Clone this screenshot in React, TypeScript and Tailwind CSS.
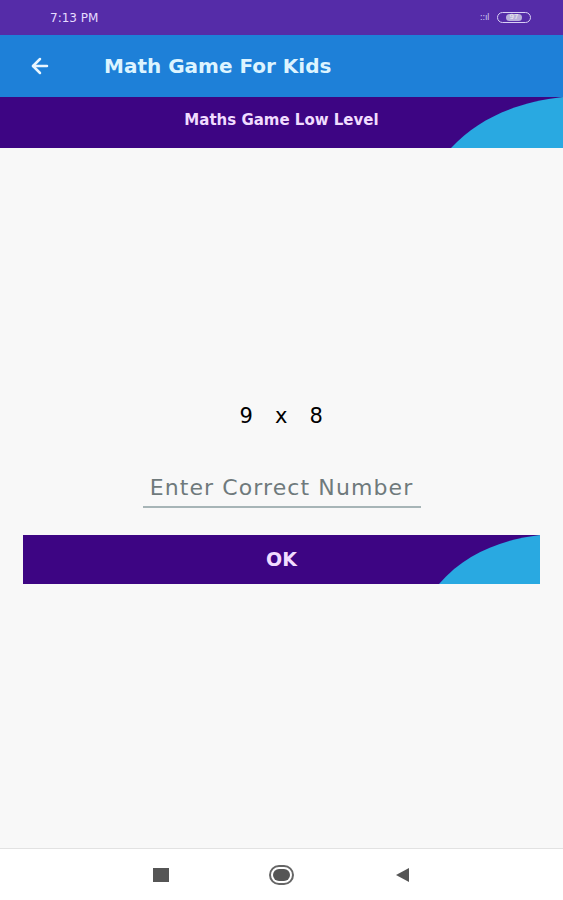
import { ArrowLeft } from "lucide-react";

const font = { fontFamily: '"DejaVu Sans", "Noto Sans", sans-serif' };

function Curve({ className }: { className: string }) {
  return (
    <svg
      className={className}
      viewBox="0 0 100 50"
      preserveAspectRatio="none"
    >
      <path d="M0 50 C 25 20, 60 5, 100 0 L100 50 Z" fill="#29a9e1" />
    </svg>
  );
}

export default function App() {
  return (
    <div className="w-[563px] h-[900px] flex flex-col bg-[#f8f8f8]" style={font}>
      {/* status bar */}
      <div className="h-[35px] bg-[#552ca8] flex items-center justify-between px-[50px] pr-[32px]">
        <span className="text-[12px] text-[#e6dcff]">7:13 PM</span>
        <div className="flex items-center gap-2">
          <span className="text-[9px] text-[#cfc4ef] tracking-tighter">::ıl</span>
          <div className="w-[34px] h-[11px] rounded-full border border-[#d8d0f5] flex items-center justify-center">
            <span className="text-[7px] leading-none text-[#eee] bg-[#b9b0da] px-1 rounded-sm">97</span>
          </div>
        </div>
      </div>

      {/* app bar */}
      <div className="h-[62px] bg-[#1e80d8] flex items-center">
        <ArrowLeft className="ml-[28px] w-[24px] h-[24px] text-[#eaf6ff]" strokeWidth={2.5} />
        <span className="ml-[52px] text-[20px] font-bold text-[#ddf4ff]">
          Math Game For Kids
        </span>
      </div>

      {/* level banner */}
      <div className="relative h-[51px] bg-[#3d0583] flex items-center justify-center overflow-hidden">
        <span className="-mt-[4px] text-[15px] font-bold text-[#f1dcff]">
          Maths Game Low Level
        </span>
        <Curve className="absolute right-0 bottom-0 w-[112px] h-[51px]" />
      </div>

      {/* content */}
      <div className="flex-1 flex flex-col items-center">
        <div className="mt-[253px] text-[21px] font-medium text-black tracking-wide">
          9&nbsp;&nbsp;&nbsp;x&nbsp;&nbsp;&nbsp;8
        </div>
        <div className="mt-[38px] w-[278px] border-b-2 border-[#a7b5b7] pb-[2px] text-center text-[22px] tracking-wider text-[#6f7a7c] whitespace-nowrap">
          Enter Correct Number
        </div>
        <button className="relative mt-[27px] w-[517px] h-[49px] bg-[#3d0583] flex items-center justify-center overflow-hidden">
          <span className="text-[19px] font-bold text-[#f1dcff]">OK</span>
          <Curve className="absolute right-0 bottom-0 w-[101px] h-[49px]" />
        </button>
      </div>

      {/* nav bar */}
      <div className="h-[52px] bg-white border-t border-[#e2e2e2] flex items-center justify-center gap-[100px]">
        <div className="w-[16px] h-[14px] bg-[#555]" />
        <div className="w-[25px] h-[20px] rounded-full border-2 border-[#666] flex items-center justify-center">
          <div className="w-[17px] h-[12px] rounded-full bg-[#555]" />
        </div>
        <svg width="16" height="16" viewBox="0 0 16 16">
          <path d="M15 1 L15 15 L2 8 Z" fill="#555" />
        </svg>
      </div>
    </div>
  );
}
